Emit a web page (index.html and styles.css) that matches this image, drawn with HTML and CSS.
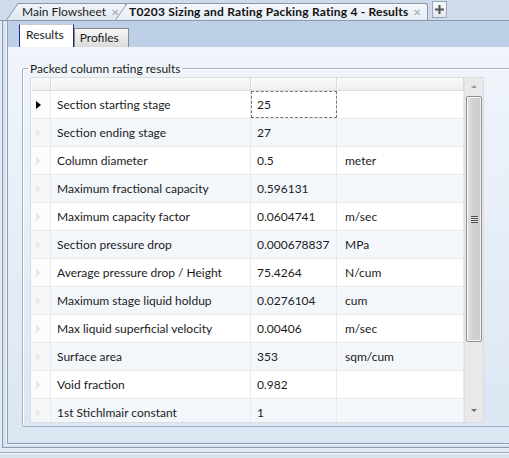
FILE: index.html
```html
<!DOCTYPE html>
<html>
  <head>
    <title>Packing Rating Results</title>
    <link rel="stylesheet" href="styles.css">
  </head>
  <body>
    <div class="doc-tabs">
      <div class="doc-tab">
        <span class="doc-tab-label">Main Flowsheet</span>
        <span class="doc-tab-close">&#x2715;</span>
      </div>
      <div class="doc-tab doc-tab-active">
        <span class="doc-tab-label">T0203 Sizing and Rating Packing Rating 4 - Results</span>
        <span class="doc-tab-close">&#x2715;</span>
      </div>
      <div class="doc-tab-add">
        <svg width="11" height="11" viewBox="0 0 11 11">
          <path d="M5.5 1v9M1 5.5h9" stroke="#555" stroke-width="2"/>
        </svg>
      </div>
    </div>

    <div class="frame">
      <div class="panel">
        <div class="panel-tabs">
          <div class="ptab ptab-active">Results</div>
          <div class="ptab">Profiles</div>
        </div>
        <div class="panel-body">
          <fieldset class="groupbox">
            <legend>Packed column rating results</legend>
            <div class="grid">
              <div class="grid-main">
                <div class="grid-header">
                  <div class="hcell"></div>
                  <div class="hcell"></div>
                  <div class="hcell"></div>
                  <div class="hcell"></div>
                </div>
                <div id="rows"></div>
              </div>
              <div class="scrollbar">
                <div class="sb-arrow sb-up"></div>
                <div class="sb-thumb"><div class="sb-grip"></div></div>
                <div class="sb-arrow sb-down"></div>
              </div>
            </div>
          </fieldset>
        </div>
      </div>
    </div>
    <div class="status"></div>

    <script>
      const results = [
        ['Section starting stage', '25', ''],
        ['Section ending stage', '27', ''],
        ['Column diameter', '0.5', 'meter'],
        ['Maximum fractional capacity', '0.596131', ''],
        ['Maximum capacity factor', '0.0604741', 'm/sec'],
        ['Section pressure drop', '0.000678837', 'MPa'],
        ['Average pressure drop / Height', '75.4264', 'N/cum'],
        ['Maximum stage liquid holdup', '0.0276104', 'cum'],
        ['Max liquid superficial velocity', '0.00406', 'm/sec'],
        ['Surface area', '353', 'sqm/cum'],
        ['Void fraction', '0.982', ''],
        ['1st Stichlmair constant', '1', '']
      ];

      const rowsDiv = document.getElementById('rows');
      rowsDiv.innerHTML = results.map((r, i) => `
        <div class="row ${i % 2 ? 'row-alt' : ''}">
          <div class="cell rowhead"><span class="marker ${i === 0 ? 'marker-current' : ''}"></span></div>
          <div class="cell name">${r[0]}</div>
          <div class="cell value ${i === 0 ? 'focused' : ''}">${r[1]}</div>
          <div class="cell unit">${r[2]}</div>
        </div>
      `).join('');
    </script>
  </body>
</html>
```

FILE: styles.css
```css
html, body {
  margin: 0;
  width: 509px;
  height: 458px;
  overflow: hidden;
}

body {
  font-family: Lato, "Noto Sans", sans-serif;
  font-size: 12px;
  color: #1b1b1b;
  background-color: #e1e9f3;
}

/* document tab strip */
.doc-tabs {
  display: flex;
  align-items: flex-end;
  height: 20px;
  padding-left: 6px;
  background-color: #cfdbeb;
  border-bottom: 1px solid #8c99ab;
}

.doc-tab {
  position: relative;
  z-index: 1;
  display: flex;
  align-items: center;
  height: 17px;
  padding: 0 8px 0 16px;
  margin-right: -12px;
}

.doc-tab::before,
.doc-tab::after {
  content: "";
  position: absolute;
  top: 0;
  bottom: 0;
  z-index: -1;
  border-top: 1px solid #8c99ab;
  background: linear-gradient(#f1f5fa, #dfe7f1);
}

.doc-tab::before {
  left: 0;
  width: 18px;
  border-left: 1px solid #8c99ab;
  transform: skewX(-35deg);
  transform-origin: bottom left;
}

.doc-tab::after {
  left: 12px;
  right: 0;
  border-right: 1px solid #8c99ab;
  border-top-right-radius: 3px;
}

.doc-tab-active {
  z-index: 2;
  margin-right: 0;
  padding-left: 14px;
  padding-right: 7px;
}

.doc-tab-active .doc-tab-label {
  font-weight: bold;
  letter-spacing: 0.2px;
  color: #111;
}

.doc-tab-active::before,
.doc-tab-active::after {
  background: linear-gradient(#f5f8fc, #e6edf5);
}

.doc-tab-close {
  margin-left: 5px;
  font-size: 10px;
  color: #a3a8b0;
}

.doc-tab-add {
  display: flex;
  align-items: center;
  justify-content: center;
  width: 13px;
  height: 15px;
  margin: 0 0 2px 4px;
  border: 1px solid #9ba7b8;
  background: linear-gradient(#f6f8fb, #e2e8f0);
}

/* outer frame */
.frame {
  margin-left: 2px;
  padding: 0 0 3px 4px;
  border-left: 1px solid #8c99ab;
  border-bottom: 1px solid #8c99ab;
  background-color: #d6e1ef;
}

.panel {
  border-left: 1px solid #8c99ab;
  border-bottom: 1px solid #8c99ab;
  box-shadow: -1px 1px 0 #f3f6fa;
}

.panel-tabs {
  display: flex;
  align-items: flex-end;
  height: 26px;
  padding-left: 11px;
  background-color: #bdd0e8;
}

.ptab {
  height: 18px;
  padding: 0 9px 0 5px;
  line-height: 17px;
  border: 1px solid #8a8a8a;
  border-bottom: none;
  background: linear-gradient(#f8f8f8, #dadada);
}

.ptab-active {
  height: 22px;
  padding: 0 9px 0 6px;
  line-height: 20px;
  border-color: #c8ccd2;
  border-left: 1px solid #1b2a88;
  border-right: 1px solid #1b2a88;
  background: #fff;
}

.panel-body {
  height: 396px;
  box-sizing: border-box;
  padding: 14px 0 0 14px;
  overflow: hidden;
  background: linear-gradient(#f0f5fb, #dbe6f3);
}

/* group box, its right edge runs past the window */
.groupbox {
  margin: 0 -6px 0 0;
  padding: 1px 0 3px 7px;
  border: 1px solid #a4b2c4;
  border-radius: 2px;
  box-shadow: inset 1px 1px 0 #fff;
}

.groupbox legend {
  padding: 0 2px;
  margin-left: -2px;
  line-height: 15px;
  color: #1b1b1b;
}

/* results grid */
.grid {
  display: flex;
  width: 452px;
  height: 344px;
  border: 1px solid #d9dde2;
  background-color: #fff;
  overflow: hidden;
}

.grid-main {
  width: 434px;
}

.grid-header,
.row {
  display: grid;
  grid-template-columns: 20px 200px 86px 1fr;
}

.grid-header {
  height: 12px;
  background: linear-gradient(#fbfbfb, #eeeeee);
  border-bottom: 1px solid #dcdcdc;
}

.hcell {
  border-right: 1px solid #dadada;
  box-shadow: inset 1px 0 0 #fff;
}

.row {
  height: 27px;
  border-bottom: 1px solid #e8eaed;
}

.row-alt {
  background-color: #f3f7fc;
}

.cell {
  display: flex;
  align-items: center;
  border-right: 1px solid #e8eaed;
  white-space: nowrap;
}

.rowhead {
  justify-content: center;
  background-color: #fcfcfc;
}

.row-alt .rowhead {
  background-color: #f6f7f9;
}

.marker {
  width: 0;
  height: 0;
  border-top: 4px solid transparent;
  border-bottom: 4px solid transparent;
  border-left: 5px solid #e6e8eb;
  margin-left: -5px;
}

.marker-current {
  border-left-color: #000;
}

.name {
  padding-left: 6px;
}

.value {
  padding-left: 6px;
}

.focused {
  outline: 1px dashed #777;
  outline-offset: -1px;
}

.unit {
  padding-left: 8px;
}

/* vertical scroll bar */
.scrollbar {
  position: relative;
  width: 18px;
  background-color: #e9e9e9;
  border-left: 1px solid #e0e0e0;
}

.sb-arrow {
  height: 17px;
  display: flex;
  align-items: center;
  justify-content: center;
}

.sb-up::before,
.sb-down::before {
  content: "";
  border-left: 3px solid transparent;
  border-right: 3px solid transparent;
}

.sb-up::before {
  border-bottom: 3px solid #9a9a9a;
}

.sb-down {
  position: absolute;
  left: 0;
  right: 0;
  bottom: 3px;
}

.sb-down::before {
  border-top: 3px solid #6e6e6e;
}

.sb-thumb {
  display: flex;
  align-items: center;
  justify-content: center;
  height: 244px;
  margin: 1px 1px 0 1px;
  border: 1px solid #8f8f8f;
  border-radius: 2px;
  box-shadow: inset 1px 1px 0 #fafafa, inset -1px -1px 0 #f2f2f2;
  background: linear-gradient(90deg, #e4e4e4, #d2d2d2 40%, #cbcbcb);
}

.sb-grip {
  width: 7px;
  height: 7px;
  background: repeating-linear-gradient(#4a4a4a 0 1px, #e8e8e8 1px 2px);
}

.status {
  height: 6px;
  margin-top: 4px;
  border-top: 1px solid #9ba8ba;
  box-shadow: inset 0 1px 0 #f4f7fb;
  background-color: #d8e2ef;
}
```
